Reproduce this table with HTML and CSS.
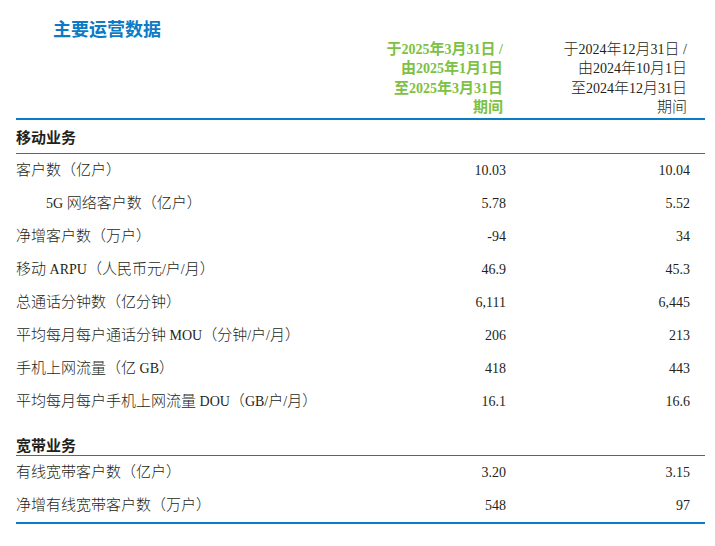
FILE: index.html
```html
<!DOCTYPE html>
<html lang="zh-CN">
<head>
<meta charset="utf-8">
<title>主要运营数据</title>
<link rel="stylesheet" href="styles.css">
</head>
<body>
<div class="page">
  <h1 class="title">主要运营数据</h1>
  <div class="table">
    <div class="head">
      <div class="h-label"></div>
      <div class="h-col h-cur">于<span class="lat">2025</span>年<span class="lat">3</span>月<span class="lat">31</span>日<span class="lat"> /</span><br>由<span class="lat">2025</span>年<span class="lat">1</span>月<span class="lat">1</span>日<br>至<span class="lat">2025</span>年<span class="lat">3</span>月<span class="lat">31</span>日<br>期间</div>
      <div class="h-col h-prev">于<span class="lat">2024</span>年<span class="lat">12</span>月<span class="lat">31</span>日<span class="lat"> /</span><br>由<span class="lat">2024</span>年<span class="lat">10</span>月<span class="lat">1</span>日<br>至<span class="lat">2024</span>年<span class="lat">12</span>月<span class="lat">31</span>日<br>期间</div>
    </div>
    <div class="section first">移动业务</div>
    <div class="rows">
      <div class="row"><span class="label">客户数（亿户）</span><span class="v1">10.03</span><span class="v2">10.04</span></div>
      <div class="row"><span class="label indent"><span class="lat">5G </span>网络客户数（亿户）</span><span class="v1">5.78</span><span class="v2">5.52</span></div>
      <div class="row"><span class="label">净增客户数（万户）</span><span class="v1">-94</span><span class="v2">34</span></div>
      <div class="row"><span class="label">移动<span class="lat"> ARPU</span>（人民币元<span class="lat">/</span>户<span class="lat">/</span>月）</span><span class="v1">46.9</span><span class="v2">45.3</span></div>
      <div class="row"><span class="label">总通话分钟数（亿分钟）</span><span class="v1">6,111</span><span class="v2">6,445</span></div>
      <div class="row"><span class="label">平均每月每户通话分钟<span class="lat"> MOU</span>（分钟<span class="lat">/</span>户<span class="lat">/</span>月）</span><span class="v1">206</span><span class="v2">213</span></div>
      <div class="row"><span class="label">手机上网流量（亿<span class="lat"> GB</span>）</span><span class="v1">418</span><span class="v2">443</span></div>
      <div class="row"><span class="label">平均每月每户手机上网流量<span class="lat"> DOU</span>（<span class="lat">GB/</span>户<span class="lat">/</span>月）</span><span class="v1">16.1</span><span class="v2">16.6</span></div>
    </div>
    <div class="section second">宽带业务</div>
    <div class="rows last">
      <div class="row"><span class="label">有线宽带客户数（亿户）</span><span class="v1">3.20</span><span class="v2">3.15</span></div>
      <div class="row"><span class="label">净增有线宽带客户数（万户）</span><span class="v1">548</span><span class="v2">97</span></div>
    </div>
  </div>
</div>
</body>
</html>
```

FILE: styles.css
```css
* { box-sizing: border-box; }
html, body { margin: 0; padding: 0; background: #ffffff; }
body {
  font-family: "Liberation Serif", "Noto Sans CJK SC", serif;
  color: #231f20;
  font-size: 15px;
}
.page {
  width: 715px;
  height: 546px;
  padding: 19px 10px 0 16px;
}
.title {
  margin: 0 0 0 37px;
  height: 21px;
  font-family: "Noto Sans CJK SC", sans-serif;
  font-size: 18px;
  font-weight: 700;
  line-height: 19px;
  color: #0b7bc6;
}
.table {
  width: 689px;
}
.lat {
  font-size: 14px;
}
.head {
  display: grid;
  grid-template-columns: 1fr 120px 199px;
  border-bottom: 2px solid #0a7dc8;
}
.h-col {
  text-align: right;
  line-height: 19.4px;
  white-space: nowrap;
}
.h-cur {
  color: #7cc142;
  font-weight: 700;
  padding-right: 3px;
}
.h-prev {
  font-weight: 300;
  padding-right: 18px;
}
.section {
  font-weight: 700;
  font-size: 15px;
  border-bottom: 1px solid #0a7dc8;
  display: flex;
  align-items: center;
}
.section.first {
  height: 34px;
  padding-top: 1px;
}
.section.second {
  height: 38px;
  align-items: flex-end;
  padding-bottom: 1px;
  line-height: 16px;
}
.rows.last {
  border-bottom: 2px solid #0a7dc8;
}
.row {
  display: grid;
  grid-template-columns: 1fr 120px 199px;
  height: 33px;
  line-height: 32px;
  align-items: baseline;
  font-weight: 300;
}
.label {
  white-space: nowrap;
}
.indent {
  padding-left: 30px;
}
.v1, .v2 {
  font-size: 14px;
  text-align: right;
}
.v2 {
  padding-right: 15px;
}
```
